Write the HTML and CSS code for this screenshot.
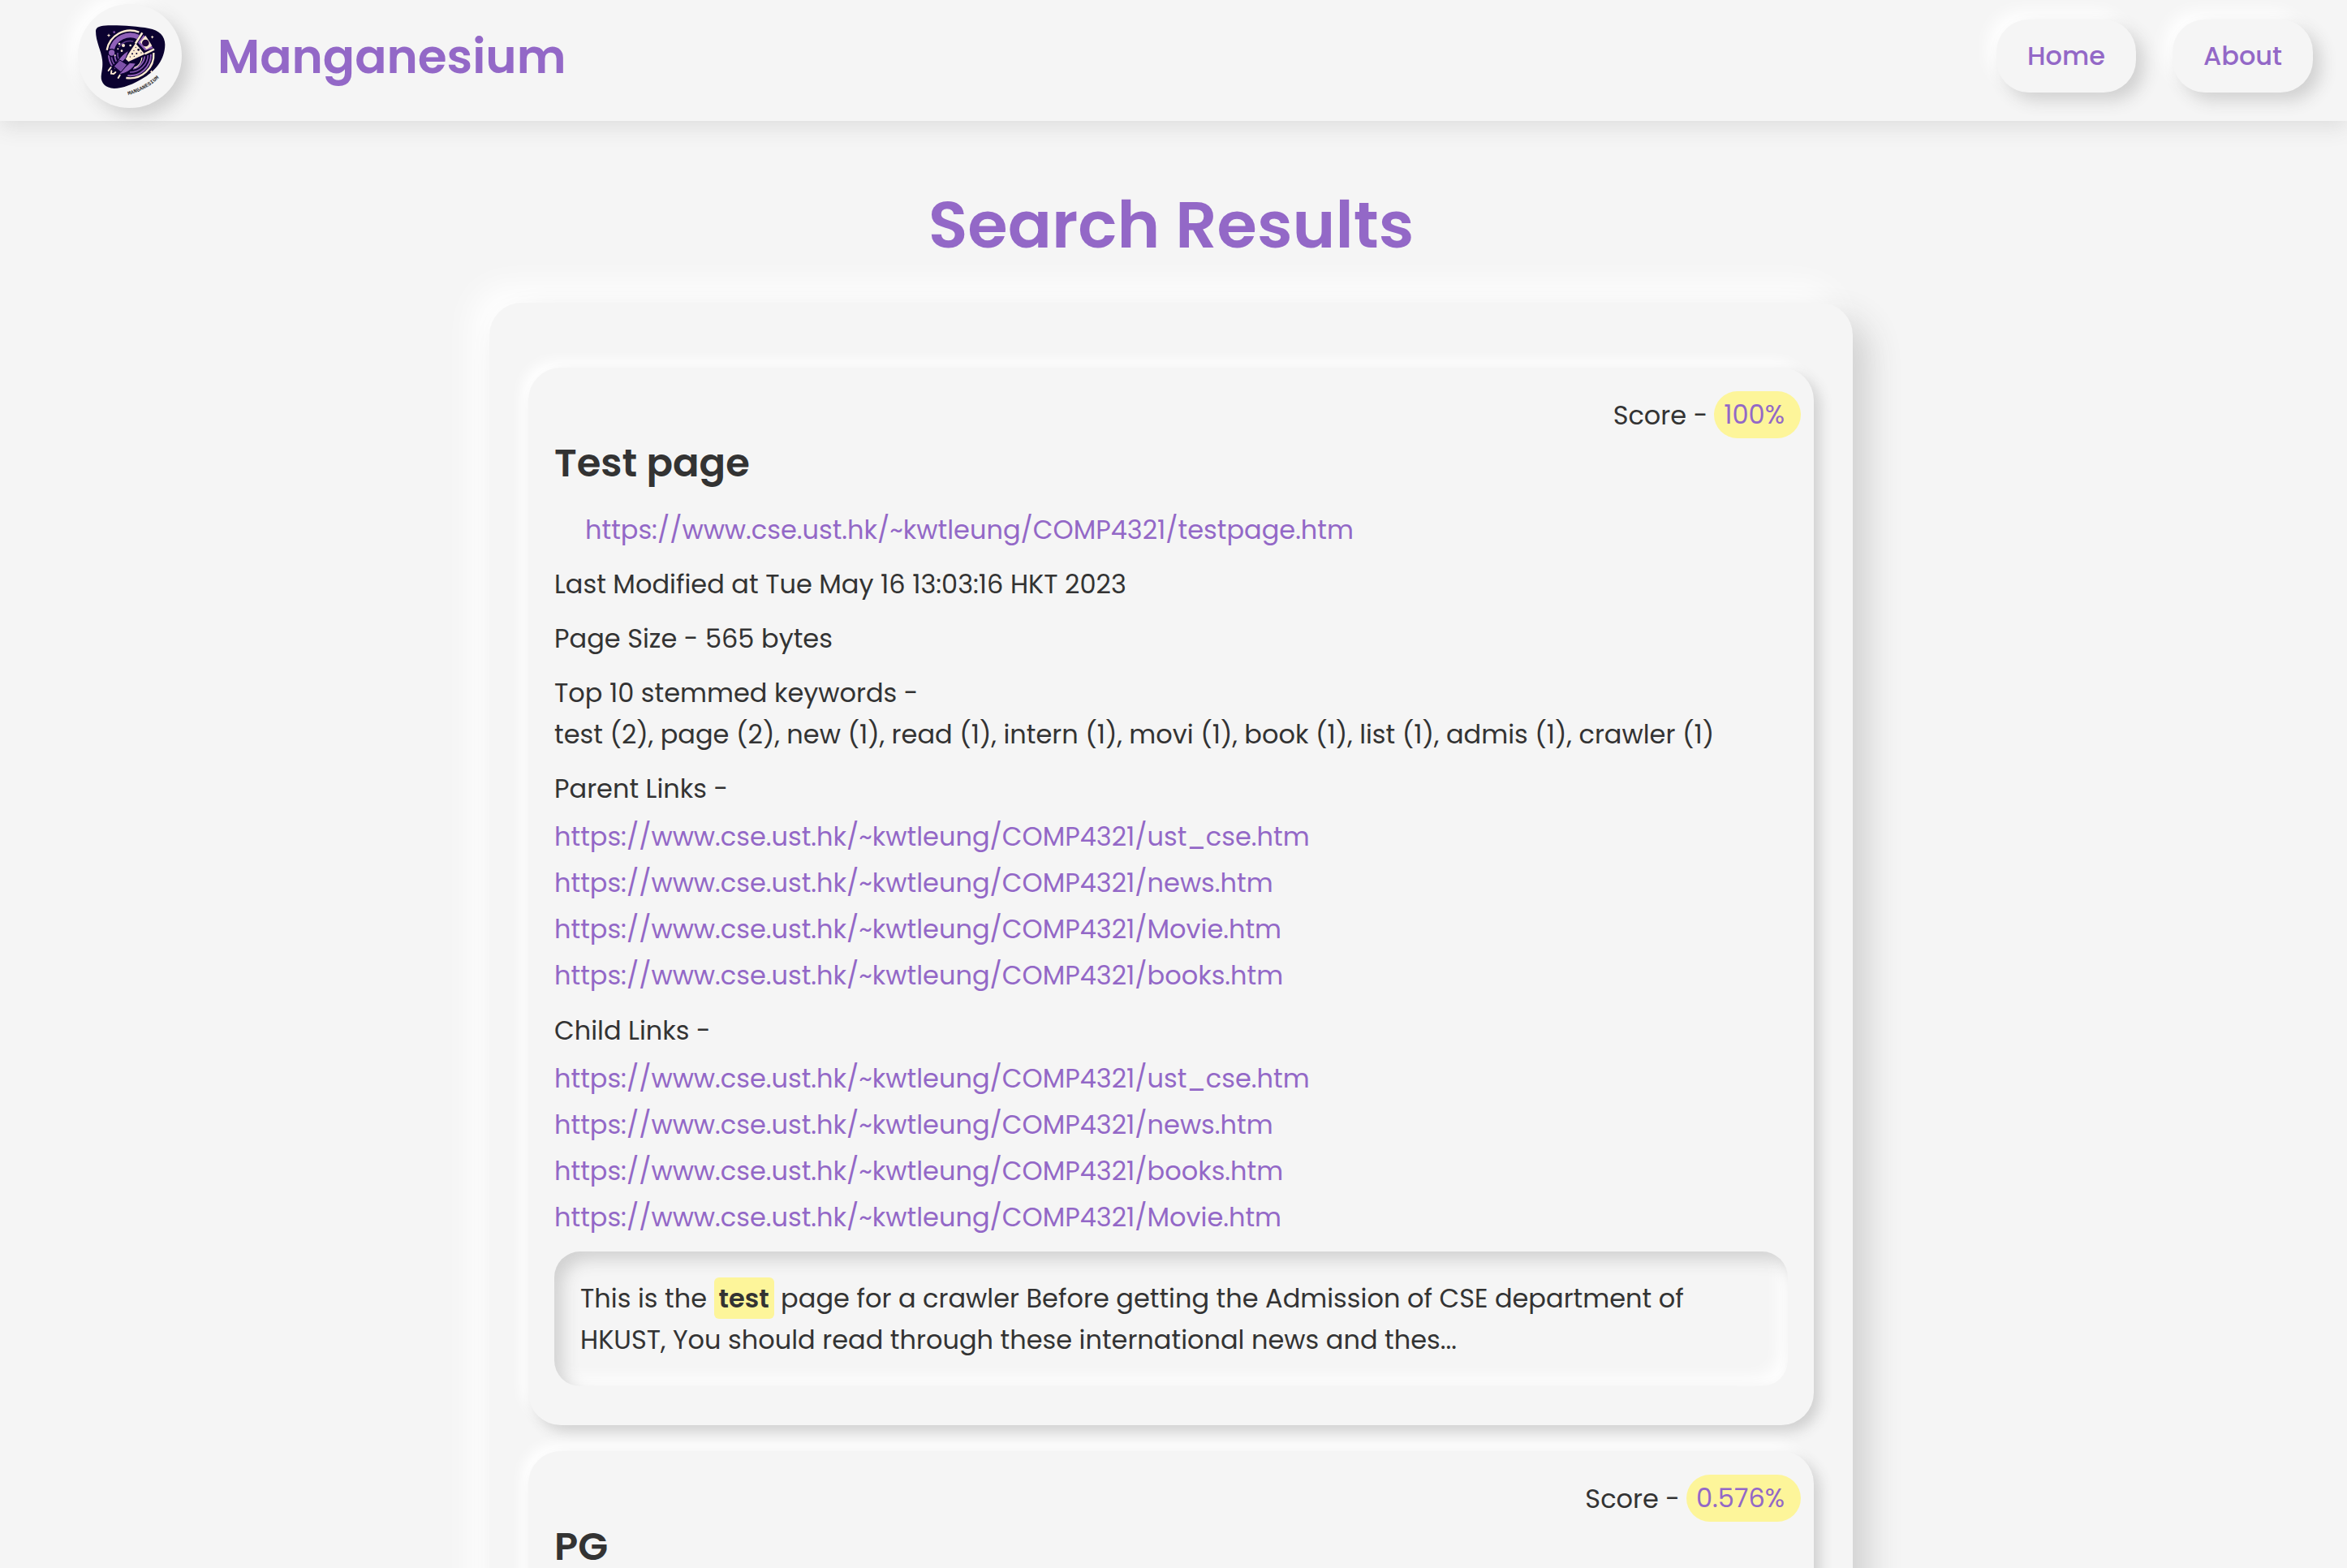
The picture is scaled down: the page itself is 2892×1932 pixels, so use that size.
FILE: index.html
```html
<!DOCTYPE html>
<html lang="en">
<head>
<meta charset="utf-8">
<title>Manganesium</title>
<link rel="stylesheet" href="styles.css">
</head>
<body>
<header class="navbar">
  <div class="brand">
    <span class="logo">
      <svg viewBox="0 0 384 384" aria-hidden="true">
        <path d="M66 100C66 84 84 80 112 79C160 78 220 82 262 90C300 97 322 118 322 150C321 205 288 245 246 271C206 297 164 312 134 312C102 311 85 292 86 268C88 246 93 232 90 206C86 170 66 140 66 100Z" fill="#0b0230"/>
        <g fill="none">
          <path d="M125 168A71 71 0 0 1 224 122" stroke="#9060b8" stroke-width="18"/>
          <path d="M152 158A50 50 0 0 1 205 138" stroke="#5c3a87" stroke-width="5"/>
          <path d="M114 188A79 79 0 0 0 126 228M270 186A78 78 0 0 1 184 264" stroke="#9060b8" stroke-width="6"/>
          <path d="M124 196A68 68 0 0 0 134 222M259 188A66 66 0 0 1 192 252" stroke="#7d50a8" stroke-width="5"/>
          <path d="M136 186A56 56 0 0 0 142 212M247 190A54 54 0 0 1 204 240" stroke="#9060b8" stroke-width="5"/>
          <path d="M147 180A46 46 0 0 0 150 202" stroke="#7d50a8" stroke-width="4"/>
          <path d="M107 170A88 88 0 0 1 226 104M280 180A88 88 0 0 1 178 273" stroke="#fdebd2" stroke-width="7"/>
          <path d="M237 194A46 46 0 0 1 208 236" stroke="#fdebd2" stroke-width="4"/>
        </g>
        <circle cx="125" cy="180" r="13" fill="#9060b8" stroke="#0b0230" stroke-width="4"/>
        <path d="M236 100L284 178L206 210L166 215Z" fill="#0b0230"/>
        <path d="M243 114L278 163L248 172L222 143Z" fill="#9060b8"/>
        <path d="M250 116L274 154L254 168L230 140Z" fill="#fdebd2"/>
        <circle cx="250" cy="144" r="13" fill="#21063f"/>
        <path d="M213 145L247 185L187 213L175 202Z" fill="#fdebd2"/>
        <path d="M238 106L213 146M282 167L247 184" stroke="#fdebd2" stroke-width="8"/>
        <g fill="#0b0230"><circle cx="214" cy="160" r="2"/><circle cx="224" cy="169" r="4"/><circle cx="234" cy="180" r="2"/><circle cx="207" cy="172" r="2"/><circle cx="217" cy="183" r="3"/><circle cx="201" cy="184" r="3"/><circle cx="208" cy="193" r="2"/><circle cx="193" cy="195" r="2"/></g>
        <g stroke="#0b0230" stroke-width="3">
          <path d="M188 172C168 182 143 207 132 244L151 230L178 199Z" fill="#9060b8"/>
          <path d="M192 217L162 246L151 260C174 258 199 246 214 219Z" fill="#9060b8"/>
          <path d="M155 207L182 224L159 252L133 230Z" fill="#7d50a8"/>
        </g>
        <path d="M122 234L113 246M124 247L123 257L132 258L139 252M155 263L149 273" stroke="#fdebd2" stroke-width="6" stroke-linecap="round" fill="none"/>
        <g fill="#fdebd2"><circle cx="168" cy="153" r="6"/><circle cx="153" cy="147" r="4"/><circle cx="148" cy="166" r="3"/><circle cx="162" cy="173" r="4"/><circle cx="194" cy="153" r="4"/><circle cx="137" cy="190" r="3"/>
          <path d="M114 109L116 114L121 116L116 118L114 123L112 118L107 116L112 114ZM275 116L277 120L281 122L277 124L275 128L273 124L269 122L273 120ZM272 244L274 248L278 250L274 252L272 256L270 252L266 250L270 248Z"/></g>
        <circle cx="134" cy="104" r="4" fill="#7d50a8"/>
        <path id="wordmark" d="M186 337Q258 317 316 259" fill="none"/>
        <text class="wordmark"><textPath href="#wordmark">MANGANESIUM</textPath></text>
      </svg>
    </span>
    <span class="brand-name">Manganesium</span>
  </div>
  <nav class="nav">
    <a class="nav-link" href="#home">Home</a>
    <a class="nav-link" href="#about">About</a>
  </nav>
</header>
<main class="page">
  <h1 class="page-title">Search Results</h1>
  <section class="results">
    <article class="card">
      <div class="score">Score - <span class="score-value">100%</span></div>
      <h2 class="card-title">Test page</h2>
      <p class="card-url"><a href="#testpage">https://www.cse.ust.hk/~kwtleung/COMP4321/testpage.htm</a></p>
      <p>Last Modified at Tue May 16 13:03:16 HKT 2023</p>
      <p>Page Size - 565 bytes</p>
      <p>Top 10 stemmed keywords -<br>test (2), page (2), new (1), read (1), intern (1), movi (1), book (1), list (1), admis (1), crawler (1)</p>
      <h3 class="links-title">Parent Links -</h3>
      <ul class="links">
        <li><a href="#ust_cse">https://www.cse.ust.hk/~kwtleung/COMP4321/ust_cse.htm</a></li>
        <li><a href="#news">https://www.cse.ust.hk/~kwtleung/COMP4321/news.htm</a></li>
        <li><a href="#movie">https://www.cse.ust.hk/~kwtleung/COMP4321/Movie.htm</a></li>
        <li><a href="#books">https://www.cse.ust.hk/~kwtleung/COMP4321/books.htm</a></li>
      </ul>
      <h3 class="links-title">Child Links -</h3>
      <ul class="links">
        <li><a href="#ust_cse">https://www.cse.ust.hk/~kwtleung/COMP4321/ust_cse.htm</a></li>
        <li><a href="#news">https://www.cse.ust.hk/~kwtleung/COMP4321/news.htm</a></li>
        <li><a href="#books">https://www.cse.ust.hk/~kwtleung/COMP4321/books.htm</a></li>
        <li><a href="#movie">https://www.cse.ust.hk/~kwtleung/COMP4321/Movie.htm</a></li>
      </ul>
      <div class="snippet">This is the <mark>test</mark> page for a crawler Before getting the Admission of CSE department of HKUST, You should read through these international news and thes...</div>
    </article>
    <article class="card">
      <div class="score">Score - <span class="score-value">0.576%</span></div>
      <h2 class="card-title">PG</h2>
    </article>
  </section>
</main>
</body>
</html>
```

FILE: styles.css
```css
:root {
  --bg: #f5f5f5;
  --text: #333;
  --accent: #9368c7;
  --highlight: #fdf59a;
  --dark: #d1d1d1;
  --light: #fff;
}

* { box-sizing: border-box; }

html {
  background: var(--bg);
  scrollbar-width: none;
}

body {
  margin: 0;
  background: var(--bg);
  color: var(--text);
  font: 400 32px/51px Poppins, Inter, sans-serif;
}

a {
  color: var(--accent);
  text-decoration: none;
}

h1, h2, h3, p, ul {
  margin: 0;
  padding: 0;
}

.navbar {
  display: flex;
  align-items: center;
  justify-content: space-between;
  padding: 5px 42px 16px 96px;
  box-shadow: 0 8px 24px #dedede;
}

.brand {
  display: flex;
  align-items: center;
  gap: 44px;
}

.logo {
  width: 128px;
  height: 128px;
  border-radius: 50%;
  box-shadow: 10px 10px 20px var(--dark), -10px -10px 20px var(--light);
}

.logo svg {
  display: block;
  width: 100%;
  height: 100%;
}

.wordmark {
  font: 700 20px "Liberation Mono", monospace;
  fill: #333;
}

.brand-name {
  color: var(--accent);
  font-size: 58px;
  font-weight: 600;
}

.nav {
  display: flex;
  gap: 45px;
}

.nav-link {
  padding: 20px 38px;
  border-radius: 40px;
  font-weight: 500;
  line-height: 50px;
  box-shadow: 10px 10px 20px var(--dark), -10px -10px 20px var(--light);
}

.page {
  padding: 80px 6px 80px 0;
}

.page-title {
  margin-bottom: 48px;
  color: var(--accent);
  font-size: 80px;
  font-weight: 600;
  line-height: 96px;
  text-align: center;
}

.results {
  display: flex;
  flex-direction: column;
  gap: 32px;
  max-width: 1680px;
  margin: 0 auto;
  padding: 80px 48px;
  border-radius: 40px;
  box-shadow: 20px 20px 40px var(--dark), -20px -20px 40px var(--light);
}

.card {
  padding: 29px 32px 48px;
  border-radius: 40px;
  background: var(--bg);
  box-shadow: 8px 8px 16px var(--dark), -8px -8px 16px var(--light);
}

.card p { margin-bottom: 16px; }

.score {
  display: flex;
  align-items: center;
  justify-content: flex-end;
  gap: 8px;
  margin-right: -16px;
}

.score-value {
  padding: 3px 20px 4px 12px;
  border-radius: 29px;
  background: var(--highlight);
  color: var(--accent);
}

.card-title {
  margin-bottom: 25px;
  font-size: 48px;
  font-weight: 600;
  line-height: 62px;
}

.card .card-url { padding-left: 38px; }

.links-title {
  font-size: 32px;
  font-weight: 400;
}

.links {
  margin: 5px 0 14px;
  list-style: none;
  line-height: 57px;
}

.snippet {
  padding: 32px;
  border-radius: 32px;
  box-shadow: inset 10px 10px 20px var(--dark), inset -10px -10px 20px var(--light);
}

mark {
  display: inline-block;
  padding: 0 6px;
  border-radius: 6px;
  background: var(--highlight);
  color: inherit;
  font-weight: 600;
}
```
